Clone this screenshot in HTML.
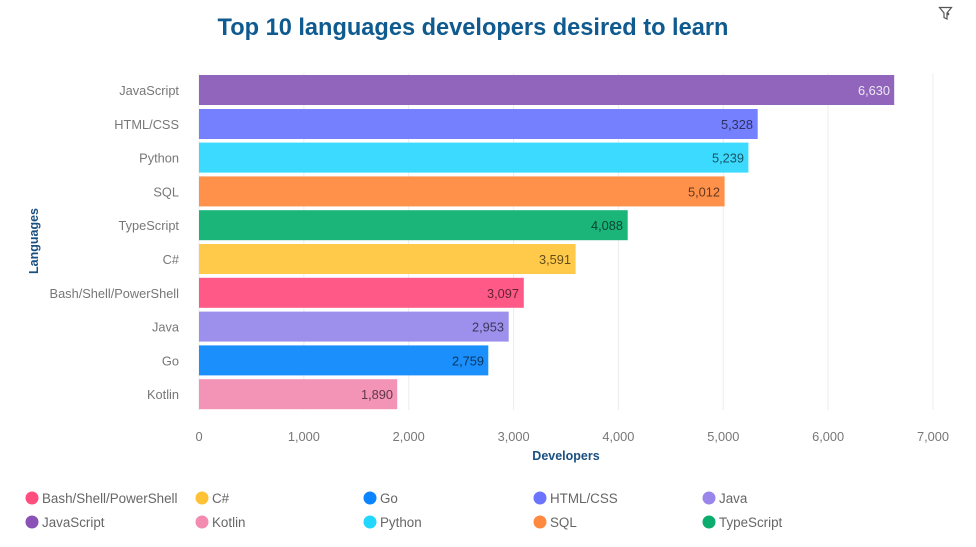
<!DOCTYPE html>
<html><head><meta charset="utf-8"><style>
html,body{margin:0;padding:0;background:#fff;width:976px;height:547px;overflow:hidden}
svg{display:block;font-family:"Liberation Sans",sans-serif}
</style></head><body>
<svg width="976" height="547" viewBox="0 0 976 547">
<text x="473" y="35" text-anchor="middle" font-size="23.6" font-weight="bold" fill="#0f5a8f">Top 10 languages developers desired to learn</text>
<g fill="none" stroke="#555" stroke-width="1.2"><path d="M939.5 7.5h12l-4.5 5.5v6l-3-1.5v-4.5z"/></g>
<circle cx="948" cy="14" r="1.3" fill="#555"/>
<g stroke="#ececec" stroke-width="1">
<line x1="199" y1="73" x2="199" y2="410"/><line x1="303.9" y1="73" x2="303.9" y2="410"/><line x1="408.7" y1="73" x2="408.7" y2="410"/><line x1="513.6" y1="73" x2="513.6" y2="410"/><line x1="618.4" y1="73" x2="618.4" y2="410"/><line x1="723.3" y1="73" x2="723.3" y2="410"/><line x1="828.1" y1="73" x2="828.1" y2="410"/><line x1="933" y1="73" x2="933" y2="410"/>
</g>
<g font-size="12.8">
<rect x="199" y="75" width="695.2" height="30" fill="#9065bb"/>
<rect x="199" y="109" width="558.7" height="30" fill="#7580ff"/>
<rect x="199" y="142.6" width="549.4" height="30" fill="#3bdafe"/>
<rect x="199" y="176.4" width="525.6" height="30" fill="#ff914b"/>
<rect x="199" y="210.2" width="428.7" height="30" fill="#1bb57a"/>
<rect x="199" y="244" width="376.6" height="30" fill="#ffc94a"/>
<rect x="199" y="277.8" width="324.8" height="30" fill="#ff5987"/>
<rect x="199" y="311.6" width="309.7" height="30" fill="#9d8fec"/>
<rect x="199" y="345.4" width="289.3" height="30" fill="#1b8ffb"/>
<rect x="199" y="379.2" width="198.2" height="30" fill="#f393b5"/>
<g fill="#777" text-anchor="end">
<text x="179" y="95">JavaScript</text><text x="179" y="128.8">HTML/CSS</text><text x="179" y="162.6">Python</text><text x="179" y="196.4">SQL</text><text x="179" y="230.2">TypeScript</text><text x="179" y="264">C#</text><text x="179" y="297.8">Bash/Shell/PowerShell</text><text x="179" y="331.6">Java</text><text x="179" y="365.4">Go</text><text x="179" y="399.2">Kotlin</text>
</g>
<g text-anchor="end" fill="rgba(0,0,0,0.62)">
<text x="890" y="95" fill="rgba(255,255,255,0.85)">6,630</text><text x="753" y="128.8">5,328</text><text x="744" y="162.6">5,239</text><text x="720" y="196.4">5,012</text><text x="623" y="230.2">4,088</text><text x="571" y="264">3,591</text><text x="519" y="297.8">3,097</text><text x="504" y="331.6">2,953</text><text x="484" y="365.4">2,759</text><text x="393" y="399.2">1,890</text>
</g>
<g fill="#777" text-anchor="middle">
<text x="199" y="441">0</text><text x="303.9" y="441">1,000</text><text x="408.7" y="441">2,000</text><text x="513.6" y="441">3,000</text><text x="618.4" y="441">4,000</text><text x="723.3" y="441">5,000</text><text x="828.1" y="441">6,000</text><text x="933" y="441">7,000</text>
</g>
</g>
<text x="566" y="460" text-anchor="middle" font-size="12.5" font-weight="bold" fill="#1a4f80">Developers</text>
<text transform="translate(38,241) rotate(-90)" text-anchor="middle" font-size="12.5" font-weight="bold" fill="#1a4f80">Languages</text>
<g font-size="13.4" fill="#666">
<circle cx="32" cy="498" r="6.5" fill="#ff4d7d"/><text x="42" y="503">Bash/Shell/PowerShell</text>
<circle cx="202" cy="498" r="6.5" fill="#ffc234"/><text x="212" y="503">C#</text>
<circle cx="370" cy="498" r="6.5" fill="#0b85ff"/><text x="380" y="503">Go</text>
<circle cx="540" cy="498" r="6.5" fill="#6c74ff"/><text x="550" y="503">HTML/CSS</text>
<circle cx="709" cy="498" r="6.5" fill="#9a86ea"/><text x="719" y="503">Java</text>
<circle cx="32" cy="522" r="6.5" fill="#8a52b7"/><text x="42" y="527">JavaScript</text>
<circle cx="202" cy="522" r="6.5" fill="#f38bb0"/><text x="212" y="527">Kotlin</text>
<circle cx="370" cy="522" r="6.5" fill="#22d6fe"/><text x="380" y="527">Python</text>
<circle cx="540" cy="522" r="6.5" fill="#ff8a3f"/><text x="550" y="527">SQL</text>
<circle cx="709" cy="522" r="6.5" fill="#0aad6d"/><text x="719" y="527">TypeScript</text>
</g>
</svg>
</body></html>
